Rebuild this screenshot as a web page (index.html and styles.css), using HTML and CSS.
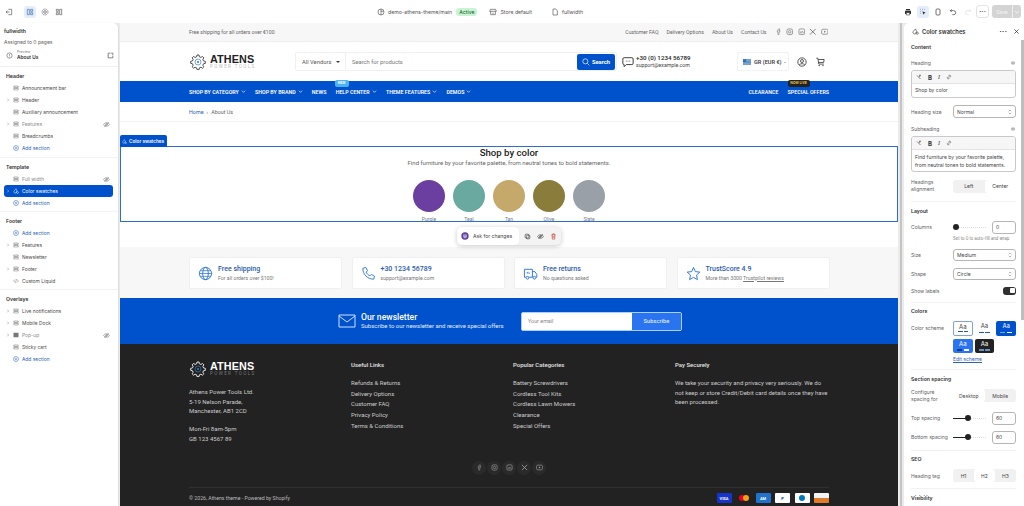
FILE: index.html
```html
<!DOCTYPE html>
<html lang="en">
<head>
    <meta charset="UTF-8">
    <title>Color swatches - fullwidth</title>
    <link rel="stylesheet" href="styles.css">
</head>
<body>

<svg class="sprite" width="0" height="0">
    <symbol id="i-sec" viewBox="0 0 12 12"><path d="M1.5 2h9v2.5h-9zM1.5 7h9v3h-9zM1.5 5.7h9" fill="none" stroke="currentColor"/></symbol>
    <symbol id="i-chev" viewBox="0 0 12 12"><path d="M4 2l4 4-4 4" fill="none" stroke="currentColor" stroke-width="1.4"/></symbol>
    <symbol id="i-down" viewBox="0 0 12 12"><path d="M2 4l4 4 4-4" fill="none" stroke="currentColor" stroke-width="1.6"/></symbol>
    <symbol id="i-updown" viewBox="0 0 12 12"><path d="M3.500 4.500L6 2l2.500 2.500M3.500 7.500L6 10l2.500-2.500" fill="none" stroke="currentColor" stroke-width="1.100"/></symbol>
    <symbol id="i-eye" viewBox="0 0 12 12"><path d="M1 6c2-4 8-4 10 0-2 4-8 4-10 0zM2.500 10L10 2" fill="none" stroke="currentColor"/><circle cx="6" cy="6" r="1.500" fill="none" stroke="currentColor"/></symbol>
    <symbol id="i-add" viewBox="0 0 12 12"><circle cx="6" cy="6" r="5" fill="none" stroke="currentColor"/><path d="M3.500 6h5M6 3.500v5" stroke="currentColor"/></symbol>
    <symbol id="i-swatch" viewBox="0 0 12 12"><path d="M6 1.500L2 6a3 3 0 0 0 4 4l2-4z" fill="none" stroke="currentColor"/><circle cx="9" cy="9" r="1.800" fill="none" stroke="currentColor"/></symbol>
    <symbol id="i-gear" viewBox="0 0 24 24"><g fill="none" stroke="currentColor" stroke-width="1.300"><path d="M10.500 1.500h3l.6 2.700 2.300 1 2.300-1.500 2.100 2.100-1.500 2.300 1 2.300 2.700.6v3l-2.700.6-1 2.300 1.500 2.300-2.100 2.100-2.300-1.500-2.300 1-.6 2.700h-3l-.6-2.700-2.300-1-2.300 1.500-2.100-2.100 1.500-2.300-1-2.300-2.700-.6v-3l2.700-.6 1-2.300-1.500-2.300 2.100-2.100 2.300 1.500 2.300-1z"/></g><circle cx="12" cy="12" r="4.500" fill="none" stroke="#2f7fc1" stroke-width="1"/><circle cx="12" cy="12" r="1.500" fill="#2f7fc1"/></symbol>
    <symbol id="i-fb" viewBox="0 0 12 12"><path d="M7.500 1.500H6.300C5.200 1.500 4.700 2.200 4.700 3.200v1.300H3.500v1.700h1.200v4.300h1.700V6.200h1.300l.3-1.700H6.400V3.500c0-.3.200-.4.500-.4h.6z" fill="none" stroke="currentColor" stroke-width=".8"/></symbol>
    <symbol id="i-ig" viewBox="0 0 12 12"><rect x="1.500" y="1.500" width="9" height="9" rx="2.500" fill="none" stroke="currentColor"/><circle cx="6" cy="6" r="2" fill="none" stroke="currentColor"/></symbol>
    <symbol id="i-in" viewBox="0 0 12 12"><rect x="1.500" y="1.500" width="9" height="9" rx="2" fill="none" stroke="currentColor"/><path d="M4 5.500V8.500M6 8.500V5.500M6 6.800c0-1.500 2.300-1.500 2.300 0v1.700" fill="none" stroke="currentColor" stroke-width=".8"/></symbol>
    <symbol id="i-x" viewBox="0 0 12 12"><path d="M1.500 1.500l9 9M10.500 1.500l-9 9" stroke="currentColor" stroke-width="1.300"/></symbol>
    <symbol id="i-yt" viewBox="0 0 12 12"><rect x="1" y="2" width="10" height="8" rx="2" fill="none" stroke="currentColor"/><path d="M5 4.300L7.800 6 5 7.700z" fill="currentColor"/></symbol>
    <symbol id="i-clear" viewBox="0 0 12 12"><path d="M2 3l3 3M5 6l4 4M6 2.500h4M8 2.500L7 6" fill="none" stroke="currentColor" stroke-width="1.200"/></symbol>
    <symbol id="i-link" viewBox="0 0 12 12"><path d="M5 7l2-2M4.500 5L3 6.500a2 2 0 0 0 2.800 2.800L7 8M5 4l1.200-1.300A2 2 0 0 1 9 5.500L7.500 7" fill="none" stroke="currentColor"/></symbol>
</svg>

<div class="topbar">
    <div class="top-left">
        <svg class="ti" viewBox="0 0 12 12"><path d="M5 2h5v8H5M7 6H1.500M3.500 4L1.500 6l2 2" fill="none" stroke="currentColor"/></svg>
        <span class="top-sep"></span>
        <span class="ti-box on"><svg class="ti" viewBox="0 0 12 12"><path d="M2 2h3v8H2zM7 2h3v3H7zM7 7h3v3H7z" fill="none" stroke="currentColor"/></svg></span>
        <span class="ti-box"><svg class="ti" viewBox="0 0 12 12"><circle cx="6" cy="6" r="2" fill="none" stroke="currentColor"/><circle cx="6" cy="6" r="4.500" fill="none" stroke="currentColor" stroke-dasharray="2 .8"/></svg></span>
        <span class="ti-box"><svg class="ti" viewBox="0 0 12 12"><path d="M2 2h3v3H2zM2 7h3v3H2zM7 2h3v8H7z" fill="none" stroke="currentColor"/></svg></span>
    </div>
    <div class="top-center">
        <span class="crumb"><svg class="ti" viewBox="0 0 12 12"><circle cx="6" cy="6" r="4.500" fill="none" stroke="currentColor"/><path d="M6 1.500v9M6 5h4" stroke="currentColor"/></svg>demo-athens-theme/main</span>
        <span class="badge-active">Active</span>
        <span class="crumb store"><svg class="ti" viewBox="0 0 12 12"><path d="M2 2h8l1 3H1zM2.500 5v5h7V5M5 8h2" fill="none" stroke="currentColor"/></svg>Store default</span>
        <span class="crumb page"><svg class="ti" viewBox="0 0 12 12"><path d="M3 1.500h4l2.500 2.500v6.500H3z" fill="none" stroke="currentColor"/></svg>fullwidth</span>
    </div>
    <div class="top-right">
        <svg class="ti dark" viewBox="0 0 12 12"><path d="M3 1.500h6v2H3zM1.500 4h9v5h-9z" fill="currentColor"/><path d="M3.500 7h5v3.500h-5z" fill="#fff" stroke="currentColor" stroke-width=".8"/></svg>
        <span class="ti-box on"><svg class="ti" viewBox="0 0 12 12"><path d="M2 2h1M5 2h1M8 2h1M2 5h1M2 8h1" stroke="currentColor"/><path d="M5 5l5 2-2 1-1 2z" fill="#222"/></svg></span>
        <svg class="ti dark" viewBox="0 0 12 12"><rect x="3" y="1.500" width="6" height="9" rx="1.500" fill="none" stroke="currentColor"/></svg>
        <svg class="ti dark" viewBox="0 0 12 12"><path d="M4 2L2 4l2 2M2 4h5a2.500 2.500 0 0 1 0 6H5" fill="none" stroke="currentColor"/></svg>
        <svg class="ti faint" viewBox="0 0 12 12"><path d="M8 2l2 2-2 2M10 4H5a2.500 2.500 0 0 0 0 6h2" fill="none" stroke="currentColor"/></svg>
        <span class="more-btn">&middot;&middot;&middot;</span>
        <span class="save-btn"><span>Save</span><i></i><svg viewBox="0 0 12 12"><use href="#i-down"/></svg></span>
    </div>
</div>

<div class="app">
    <aside class="sidebar">
        <div class="side-head">
            <div class="tpl-name">fullwidth</div>
            <div class="tpl-sub">Assigned to 0 pages</div>
            <div class="preview-row">
                <svg viewBox="0 0 12 12"><circle cx="6" cy="6" r="4.500" fill="none" stroke="currentColor"/><path d="M6 3.500V6.500M6 8v1" stroke="currentColor"/></svg>
                <div class="preview-text"><small>Preview</small><b>About Us</b></div>
                <svg class="ext" viewBox="0 0 12 12"><path d="M6 2H2v8h8V6M7 2h3v3" fill="none" stroke="currentColor" stroke-width="1.200"/></svg>
            </div>
        </div>

        <div class="group">
            <h4>Header</h4>
            <div class="row"><span class="arrow"></span><svg class="ic"><use href="#i-sec"/></svg>Announcement bar</div>
            <div class="row"><svg class="arrow"><use href="#i-chev"/></svg><svg class="ic"><use href="#i-sec"/></svg>Header</div>
            <div class="row"><span class="arrow"></span><svg class="ic"><use href="#i-sec"/></svg>Auxiliary announcement</div>
            <div class="row muted"><svg class="arrow"><use href="#i-chev"/></svg><svg class="ic"><use href="#i-sec"/></svg>Features<svg class="eye"><use href="#i-eye"/></svg></div>
            <div class="row"><span class="arrow"></span><svg class="ic"><use href="#i-sec"/></svg>Breadcrumbs</div>
            <div class="row add"><span class="arrow"></span><svg class="ic"><use href="#i-add"/></svg>Add section</div>
        </div>
        <div class="group">
            <h4>Template</h4>
            <div class="row muted"><span class="arrow"></span><svg class="ic"><use href="#i-sec"/></svg>Full width<svg class="eye"><use href="#i-eye"/></svg></div>
            <div class="row active"><svg class="arrow"><use href="#i-chev"/></svg><svg class="ic"><use href="#i-swatch"/></svg>Color swatches</div>
            <div class="row add"><span class="arrow"></span><svg class="ic"><use href="#i-add"/></svg>Add section</div>
        </div>
        <div class="group">
            <h4>Footer</h4>
            <div class="row add"><span class="arrow"></span><svg class="ic"><use href="#i-add"/></svg>Add section</div>
            <div class="row"><svg class="arrow"><use href="#i-chev"/></svg><svg class="ic"><use href="#i-sec"/></svg>Features</div>
            <div class="row"><span class="arrow"></span><svg class="ic"><use href="#i-sec"/></svg>Newsletter</div>
            <div class="row"><svg class="arrow"><use href="#i-chev"/></svg><svg class="ic"><use href="#i-sec"/></svg>Footer</div>
            <div class="row"><span class="arrow"></span><svg class="ic" viewBox="0 0 12 12"><path d="M4 3L1 6l3 3M8 3l3 3-3 3M7 2L5 10" fill="none" stroke="currentColor"/></svg>Custom Liquid</div>
        </div>
        <div class="group last">
            <h4>Overlays</h4>
            <div class="row"><svg class="arrow"><use href="#i-chev"/></svg><svg class="ic"><use href="#i-sec"/></svg>Live notifications</div>
            <div class="row"><svg class="arrow"><use href="#i-chev"/></svg><svg class="ic"><use href="#i-sec"/></svg>Mobile Dock</div>
            <div class="row muted"><svg class="arrow"><use href="#i-chev"/></svg><svg class="ic" viewBox="0 0 12 12"><rect x="1" y="1.500" width="10" height="9" fill="currentColor"/></svg>Pop-up<svg class="eye"><use href="#i-eye"/></svg></div>
            <div class="row"><span class="arrow"></span><svg class="ic"><use href="#i-sec"/></svg>Sticky cart</div>
            <div class="row add"><span class="arrow"></span><svg class="ic"><use href="#i-add"/></svg>Add section</div>
        </div>
    </aside>

    <main class="preview">
        <div class="announce">
            <div class="wrap announce-in">
                <span>Free shipping for all orders over €100</span>
                <nav class="announce-links">
                    <a>Customer FAQ</a><a>Delivery Options</a><a>About Us</a><a>Contact Us</a>
                    <span class="socials">
                        <svg><use href="#i-fb"/></svg><svg><use href="#i-ig"/></svg><svg><use href="#i-in"/></svg><svg><use href="#i-x"/></svg><svg><use href="#i-yt"/></svg>
                    </span>
                </nav>
            </div>
        </div>

        <header class="shop-header">
            <div class="wrap shop-header-in">
                <div class="logo">
                    <svg class="logo-gear"><use href="#i-gear"/></svg>
                    <div class="logo-text"><b>ATHENS</b><span>POWER TOOLS</span></div>
                </div>
                <div class="search">
                    <span class="vendors">All Vendors<i></i></span>
                    <span class="search-input">Search for products</span>
                    <span class="search-btn"><svg viewBox="0 0 12 12"><circle cx="5" cy="5" r="3.800" fill="none" stroke="#fff"/><path d="M8 8l3 3" stroke="#fff"/></svg>Search</span>
                </div>
                <div class="contact">
                    <svg viewBox="0 0 14 14"><path d="M2.500 2h9A1.500 1.500 0 0 1 13 3.500v5A1.500 1.500 0 0 1 11.500 10H5l-2.500 2.500V10A1.500 1.500 0 0 1 1 8.500v-5A1.500 1.500 0 0 1 2.500 2z" fill="none" stroke="#222"/><path d="M4.500 6h.8M6.600 6h.8M8.700 6h.8" stroke="#222"/></svg>
                    <div><b>+30 (0) 1234 56789</b><span>support@example.com</span></div>
                </div>
                <div class="currency">
                    <svg viewBox="0 0 9 6"><rect width="9" height="6" fill="#2f6fb5"/><path d="M0 1.500h9M0 3h9M0 4.500h9" stroke="#fff" stroke-width=".5"/><rect width="3.500" height="3" fill="#2f6fb5"/></svg>
                    <span>GR (EUR €)</span><i></i>
                </div>
                <svg class="head-ic" viewBox="0 0 12 12"><circle cx="6" cy="6" r="5" fill="none" stroke="#222" stroke-width=".9"/><circle cx="6" cy="4.800" r="1.800" fill="none" stroke="#222" stroke-width=".9"/><path d="M2.800 9.500c1.500-2 5-2 6.400 0" fill="none" stroke="#222" stroke-width=".9"/></svg>
                <svg class="head-ic" viewBox="0 0 12 12"><path d="M1.500 1.500h2l1 7h6M4 3h7l-.6 3.500H4.500" fill="none" stroke="#222" stroke-width=".9"/><circle cx="5" cy="10.300" r=".8" fill="#222"/><circle cx="9.500" cy="10.300" r=".8" fill="#222"/></svg>
            </div>
        </header>

        <div class="main-nav">
            <div class="wrap main-nav-in">
                <a>SHOP BY CATEGORY<svg><use href="#i-down"/></svg></a>
                <a>SHOP BY BRAND<svg><use href="#i-down"/></svg></a>
                <a>NEWS</a>
                <a class="has-badge"><em class="badge-new">NEW</em>HELP CENTER<svg><use href="#i-down"/></svg></a>
                <a>THEME FEATURES<svg><use href="#i-down"/></svg></a>
                <a>DEMOS<svg><use href="#i-down"/></svg></a>
                <a class="push">CLEARANCE</a>
                <a class="has-badge"><em class="badge-live">NOW LIVE</em>SPECIAL OFFERS</a>
            </div>
        </div>

        <div class="breadcrumbs">
            <div class="wrap"><a>Home</a><i>&rsaquo;</i>About Us</div>
        </div>

        <div class="spacer-top"></div>

        <section class="swatches">
            <span class="section-tab"><svg><use href="#i-swatch"/></svg>Color swatches</span>
            <h2>Shop by color</h2>
            <p>Find furniture by your favorite palette, from neutral tones to bold statements.</p>
            <div class="swatch-list">
                <div class="swatch"><span class="dot purple"></span>Purple</div>
                <div class="swatch"><span class="dot teal"></span>Teal</div>
                <div class="swatch"><span class="dot tan"></span>Tan</div>
                <div class="swatch"><span class="dot olive"></span>Olive</div>
                <div class="swatch"><span class="dot slate"></span>Slate</div>
            </div>
        </section>

        <div class="spacer-mid">
            <div class="float-bar">
                <span class="ask">
                    <svg viewBox="0 0 12 12"><circle cx="6" cy="6" r="5.500" fill="#5b3fa0"/><path d="M3 4.500h6M3 6.500h6M4 8.500h4" stroke="#fff"/></svg>
                    Ask for changes
                </span>
                <span class="float-ics">
                    <svg viewBox="0 0 12 12"><rect x="2" y="2" width="6.500" height="6.500" rx="1.500" fill="none" stroke="#333"/><rect x="4" y="4" width="6" height="6" rx="1.500" fill="none" stroke="#333"/></svg>
                    <svg viewBox="0 0 12 12"><use href="#i-eye"/></svg>
                    <svg class="red" viewBox="0 0 12 12"><path d="M2.500 3h7M4.500 3V1.500h3V3M3.500 3l.5 7.500h4L8.500 3M5 5v3.500M7 5v3.500" fill="none" stroke="#c0392b"/></svg>
                </span>
            </div>
        </div>

        <section class="features">
            <div class="wrap feature-grid">
                <div class="feature">
                    <svg viewBox="0 0 16 16"><circle cx="8" cy="8" r="6.500" fill="none" stroke="#2b74d8"/><ellipse cx="8" cy="8" rx="3" ry="6.500" fill="none" stroke="#2b74d8"/><path d="M1.500 8h13M2.500 5h11M2.500 11h11" stroke="#2b74d8" stroke-width=".8"/></svg>
                    <div><b>Free shipping</b><span>For all orders over $100!</span></div>
                </div>
                <div class="feature">
                    <svg viewBox="0 0 16 16"><path d="M2 2.500L5 1.500l2 3.500-1.500 1.500c.8 1.800 2.200 3.200 4 4L11 9l3.500 2-1 3c-6 .5-12-5.500-11.500-11.500z" fill="none" stroke="#2b74d8" stroke-linejoin="round"/></svg>
                    <div><b>+30 1234 56789</b><span>support@example.com</span></div>
                </div>
                <div class="feature">
                    <svg viewBox="0 0 16 16"><path d="M3 12H1.500V3.500h8.500V12H6.500M10 6h2.700l2 3v3H14M10 12h.5" fill="none" stroke="#2b74d8"/><circle cx="4.800" cy="12.500" r="1.500" fill="none" stroke="#2b74d8"/><circle cx="12.200" cy="12.500" r="1.500" fill="none" stroke="#2b74d8"/><path d="M4 7.500h3.500M4 7.500l1.300-1.300" fill="none" stroke="#2b74d8" stroke-width=".8"/></svg>
                    <div><b>Free returns</b><span>No questions asked</span></div>
                </div>
                <div class="feature">
                    <svg viewBox="0 0 16 16"><path d="M8 1.500l2 4.500 4.800.5-3.600 3.200 1 4.800L8 12.100l-4.200 2.400 1-4.800L1.200 6.500 6 6z" fill="none" stroke="#2b74d8" stroke-linejoin="round"/></svg>
                    <div><b>TrustScore 4.9</b><span>More than 3000 <u>Trustpilot reviews</u></span></div>
                </div>
            </div>
        </section>

        <section class="newsletter">
            <svg viewBox="0 0 18 14"><path d="M1 1h16v12H1zM1 2l8 6 8-6" fill="none" stroke="#cfe0fb"/></svg>
            <div class="news-text"><h3>Our newsletter</h3><p>Subscribe to our newsletter and receive special offers</p></div>
            <div class="news-form"><span>Your email</span><b>Subscribe</b></div>
        </section>

        <footer class="site-footer">
            <div class="wrap">
                <div class="foot-grid">
                    <div>
                        <div class="logo light">
                            <svg class="logo-gear"><use href="#i-gear"/></svg>
                            <div class="logo-text"><b>ATHENS</b><span>POWER TOOLS</span></div>
                        </div>
                        <p class="addr">Athens Power Tools Ltd.<br>5-19 Nelson Parade,<br>Manchester, AB1 2CD</p>
                        <p class="addr">Mon-Fri 8am-5pm<br>GB 123 4567 89</p>
                    </div>
                    <div>
                        <h5>Useful Links</h5>
                        <a>Refunds &amp; Returns</a><a>Delivery Options</a><a>Customer FAQ</a><a>Privacy Policy</a><a>Terms &amp; Conditions</a>
                    </div>
                    <div>
                        <h5>Popular Categories</h5>
                        <a>Battery Screwdrivers</a><a>Cordless Tool Kits</a><a>Cordless Lawn Mowers</a><a>Clearance</a><a>Special Offers</a>
                    </div>
                    <div>
                        <h5>Pay Securely</h5>
                        <p class="pay-note">We take your security and privacy very seriously. We do not keep or store Credit/Debit card details once they have been processed.</p>
                    </div>
                </div>
                <div class="foot-social">
                    <span><svg><use href="#i-fb"/></svg></span><span><svg><use href="#i-ig"/></svg></span><span><svg><use href="#i-in"/></svg></span><span><svg><use href="#i-x"/></svg></span><span><svg><use href="#i-yt"/></svg></span>
                </div>
                <div class="foot-bottom">
                    <span>© 2026, Athens theme - Powered by Shopify</span>
                    <div class="pay-cards">
                        <span class="card visa">VISA</span>
                        <span class="card mc"><i></i><i></i></span>
                        <span class="card amex">AM</span>
                        <span class="card paypal">P</span>
                        <span class="card diners"><i></i></span>
                        <span class="card disc"></span>
                    </div>
                </div>
            </div>
        </footer>
    </main>

    <div class="gutter"></div>

    <aside class="panel">
        <div class="panel-head">
            <svg><use href="#i-swatch"/></svg><b>Color swatches</b>
            <span class="dots">&middot;&middot;&middot;</span>
            <svg class="close" viewBox="0 0 12 12"><path d="M2.500 2.500l7 7M9.500 2.500l-7 7" stroke="currentColor" stroke-width="1.300"/></svg>
        </div>
        <div class="panel-body">
            <h4>Content</h4>
            <div class="label-row"><label>Heading</label><svg viewBox="0 0 12 12"><ellipse cx="6" cy="6" rx="4.500" ry="3.500" fill="#bbb"/></svg></div>
            <div class="editor">
                <div class="ed-tools"><svg><use href="#i-clear"/></svg><b>B</b><em>I</em><svg><use href="#i-link"/></svg></div>
                <div class="ed-text">Shop by color</div>
            </div>
            <div class="field"><label>Heading size</label><span class="select">Normal<svg><use href="#i-updown"/></svg></span></div>
            <div class="label-row"><label>Subheading</label><svg viewBox="0 0 12 12"><ellipse cx="6" cy="6" rx="4.500" ry="3.500" fill="#bbb"/></svg></div>
            <div class="editor">
                <div class="ed-tools"><svg><use href="#i-clear"/></svg><b>B</b><em>I</em><svg><use href="#i-link"/></svg></div>
                <div class="ed-text tall">Find furniture by your favorite palette, from neutral tones to bold statements.</div>
            </div>
            <div class="field"><label class="two">Headings alignment</label><span class="seg"><a>Left</a><a class="sel">Center</a></span></div>
            <hr class="wide">
            <h4>Layout</h4>
            <div class="field"><label>Columns</label><span class="slider"><i class="knob zero"></i></span><span class="num">0</span></div>
            <div class="hint">Set to 0 to auto-fill and wrap</div>
            <div class="field"><label>Size</label><span class="select">Medium<svg><use href="#i-updown"/></svg></span></div>
            <div class="field"><label>Shape</label><span class="select">Circle<svg><use href="#i-updown"/></svg></span></div>
            <div class="field toggle-row"><label>Show labels</label><span class="toggle"><i></i></span></div>
            <hr>
            <h4>Colors</h4>
            <div class="field schemes-row"><label>Color scheme</label>
                <div class="schemes">
                    <span class="sch sch-sel">Aa<i></i></span>
                    <span class="sch">Aa<i></i></span>
                    <span class="sch sch-blue">Aa<i></i></span>
                    <span class="sch sch-light">Aa<i></i></span>
                    <span class="sch sch-dark">Aa<i></i></span>
                </div>
            </div>
            <a class="edit-scheme">Edit scheme</a>
            <hr class="tight">
            <h4>Section spacing</h4>
            <div class="field"><label class="two">Configure spacing for</label><span class="seg"><a class="sel">Desktop</a><a>Mobile</a></span></div>
            <div class="field gap"><label>Top spacing</label><span class="slider"><b></b><i class="knob"></i></span><span class="num">60</span></div>
            <div class="field gap"><label>Bottom spacing</label><span class="slider"><b></b><i class="knob"></i></span><span class="num">60</span></div>
            <hr class="tight">
            <h4>SEO</h4>
            <div class="field seo"><label>Heading tag</label><span class="seg"><a>H1</a><a class="sel">H2</a><a>H3</a></span></div>
            <hr class="tight">
            <h4>Visibility</h4>
        </div>
        <span class="panel-scroll"></span>
    </aside>
</div>

</body>
</html>
```

FILE: styles.css
```css
* {
    box-sizing: border-box;
}

html, body {
    margin: 0;
    height: 100%;
    overflow: hidden;
}

body {
    font-family: "Inter", sans-serif;
    font-size: 5px;
    color: #303030;
    background: #ebebeb;
}

.sprite {
    position: absolute;
}

h2, h3, h4, h5, p {
    margin: 0;
}

/* top bar */
.topbar {
    height: 23px;
    background: #fff;
    display: flex;
    align-items: center;
    padding-left: 5px;
    padding-right: 3px;
}

.ti {
    width: 8px;
    height: 8px;
    color: #555;
    flex: none;
}

.ti.dark {
    color: #303030;
}

.ti.faint {
    color: #ddd;
}

.top-left {
    display: flex;
    align-items: center;
    gap: 2.500px;
    width: 372px;
}

.top-sep {
    width: 6px;
}

.ti-box {
    width: 12px;
    height: 12px;
    border-radius: 3px;
    display: flex;
    align-items: center;
    justify-content: center;
}

.ti-box.on {
    background: #e4edf9;
}

.ti-box.on .ti {
    color: #3b6fb5;
}

.top-center {
    display: flex;
    align-items: center;
    color: #555;
    font-size: 5.2px;
}

.crumb {
    display: flex;
    align-items: center;
    gap: 3px;
}

.store {
    margin-left: 12px;
}

.page {
    margin-left: 19px;
}

.badge-active {
    background: #c9f3d3;
    color: #0c5a2a;
    padding: 1px 3px;
    border-radius: 3px;
    margin-left: 4px;
}

.top-right {
    display: flex;
    align-items: center;
    gap: 7px;
    margin-left: auto;
}

.top-right .ti-box {
    margin: 0 -2px;
}

.more-btn {
    width: 13px;
    height: 13px;
    border: 1px solid #e3e3e3;
    border-radius: 3px;
    font-size: 8px;
    line-height: 10px;
    text-align: center;
    margin-left: -3px;
}

.save-btn {
    width: 29px;
    height: 13px;
    background: #d4d4d4;
    border-radius: 3px;
    color: #f4f4f4;
    display: flex;
    align-items: center;
    margin-left: -4px;
}

.save-btn span {
    width: 20px;
    text-align: center;
}

.save-btn i {
    width: 1px;
    height: 100%;
    background: #eee;
}

.save-btn svg {
    width: 6px;
    height: 6px;
    margin-left: 1px;
    color: #f4f4f4;
}

.app {
    display: flex;
    height: 483px;
}

/* left sidebar */
.sidebar {
    width: 118px;
    flex: none;
    background: #fff;
    border-top-right-radius: 5px;
    margin-right: 2px;
    box-shadow: 1px 0 1px #ddd;
    overflow: hidden;
}

.side-head {
    padding: 4px 4px 0;
    height: 44px;
    border-bottom: 1px solid #f1f1f1;
}

.tpl-name {
    font-weight: 600;
    font-size: 5.2px;
    line-height: 8px;
}

.tpl-sub {
    color: #616161;
    font-size: 5px;
    line-height: 8px;
    margin-top: 3px;
}

.preview-row {
    display: flex;
    align-items: center;
    gap: 4px;
    margin-top: 4px;
    padding-left: 2px;
}

.preview-row svg {
    width: 7px;
    height: 7px;
    color: #555;
    flex: none;
}

.preview-text {
    display: flex;
    flex-direction: column;
    flex: 1;
    line-height: 6px;
}

.preview-text small {
    font-size: 3.6px;
    color: #777;
    line-height: 4px;
}

.preview-text b {
    font-weight: 600;
    font-size: 4.8px;
}

.group {
    padding: 5px 5px 0 4px;
    height: 91px;
    border-bottom: 1px solid #f3f3f3;
}

.group:nth-of-type(3) {
    height: 54px;
}

.group:nth-of-type(4) {
    height: 78px;
}

.group.last {
    border: 0;
}

.group h4 {
    font-size: 5.2px;
    font-weight: 600;
    line-height: 8px;
    padding-left: 2px;
    margin-bottom: 2px;
}

.row {
    height: 12px;
    display: flex;
    align-items: center;
    color: #4a4a4a;
    font-size: 4.9px;
    border-radius: 3px;
}

.row.muted {
    color: #8a8a8a;
}

.row .arrow {
    width: 4px;
    height: 4px;
    margin-left: 2px;
    margin-right: 3px;
    color: #777;
    flex: none;
}

.row .ic {
    width: 6px;
    height: 6px;
    margin-right: 3px;
    color: #777;
    flex: none;
}

.row .eye {
    width: 7px;
    height: 7px;
    margin-left: auto;
    margin-right: 3px;
    color: #777;
}

.row.add {
    color: #2a63b7;
}

.row.add .ic {
    color: #2a63b7;
}

.row.active {
    background: #0052cc;
    color: #fff;
}

.row.active .arrow,
.row.active .ic {
    color: #fff;
}

/* storefront preview */
.preview {
    width: 778px;
    flex: none;
    background: #fff;
    display: flex;
    flex-direction: column;
    font-family: "Roboto", sans-serif;
    height: 483px;
    overflow: hidden;
}

.preview > * {
    flex: none;
}

.wrap {
    width: 640px;
    margin: 0 auto;
}

.announce {
    height: 19px;
    background: #f7f7f7;
    border-bottom: 1px solid #eee;
    color: #666;
    font-size: 5.2px;
}

.announce-in {
    height: 100%;
    display: flex;
    align-items: center;
    justify-content: space-between;
}

.announce-links {
    display: flex;
    align-items: center;
    gap: 8px;
}

.socials {
    display: flex;
    gap: 4px;
    margin-right: 1px;
}

.socials svg {
    width: 7.500px;
    height: 7.500px;
    color: #666;
}

.shop-header {
    height: 39px;
}

.shop-header-in {
    height: 100%;
    display: flex;
    align-items: center;
}

.logo {
    display: flex;
    align-items: center;
    gap: 4px;
    width: 106px;
}

.logo-gear {
    width: 16px;
    height: 16px;
    color: #333;
    margin-left: 1px;
}

.logo-text {
    display: flex;
    flex-direction: column;
    line-height: 1;
}

.logo-text b {
    font-family: "Liberation Sans", sans-serif;
    font-size: 10.8px;
    letter-spacing: .1px;
    color: #222;
}

.logo-text span {
    font-size: 4.5px;
    letter-spacing: 1.400px;
    color: #bbb;
    white-space: nowrap;
}

.logo.light .logo-gear {
    color: #fff;
}

.logo.light b {
    color: #fff;
}

.logo.light span {
    color: #777;
}

.search {
    width: 322px;
    height: 19px;
    border: 1px solid #f0f0f0;
    border-radius: 2px;
    display: flex;
    align-items: center;
    color: #777;
    font-size: 5.8px;
}

.vendors {
    width: 50px;
    padding-left: 6px;
    border-right: 1px solid #f0f0f0;
    height: 100%;
    display: flex;
    align-items: center;
    color: #555;
}

.vendors i {
    margin-left: 5px;
    border: 2px solid transparent;
    border-top-color: #333;
    margin-top: 2px;
}

.search-input {
    flex: 1;
    padding-left: 6px;
}

.search-btn {
    width: 38px;
    height: 16px;
    background: #0052cc;
    color: #fff;
    font-weight: 700;
    border-radius: 2px;
    display: flex;
    align-items: center;
    justify-content: center;
    gap: 2px;
    margin-right: 1px;
}

.search-btn svg {
    width: 8px;
    height: 8px;
}

.contact {
    display: flex;
    align-items: center;
    gap: 2px;
    margin-left: 5px;
    width: 115px;
}

.contact svg {
    width: 12px;
    height: 12px;
}

.contact div {
    display: flex;
    flex-direction: column;
    line-height: 6.5px;
    font-size: 5.2px;
    color: #444;
}

.contact b {
    font-size: 6.2px;
    font-weight: 500;
    color: #222;
}

.currency {
    width: 52px;
    height: 19px;
    border: 1px solid #f2f2f2;
    border-radius: 2px;
    display: flex;
    align-items: center;
    padding-left: 5px;
    gap: 3px;
    font-size: 5.6px;
    font-weight: 500;
    color: #333;
}

.currency svg {
    width: 8px;
    height: 6px;
}

.currency i {
    border: 1.500px solid transparent;
    border-top-color: #777;
    margin-top: 2px;
    margin-left: -1px;
}

.head-ic {
    width: 10px;
    height: 10px;
    margin-left: 8px;
}

.main-nav {
    height: 21px;
    background: #0052cc;
    color: #fff;
    font-size: 5.3px;
    font-weight: 600;
}

.main-nav-in {
    height: 100%;
    display: flex;
    align-items: center;
    gap: 9.200px;
}

.main-nav a {
    display: flex;
    align-items: center;
    gap: 2px;
    position: relative;
    white-space: nowrap;
}

.main-nav svg {
    width: 5px;
    height: 5px;
}

.main-nav .push {
    margin-left: auto;
}

.main-nav em {
    position: absolute;
    font-style: normal;
    font-size: 3.6px;
    line-height: 7px;
    height: 7px;
    border-radius: 2px;
    top: -9px;
    text-align: center;
}

.badge-new {
    background: #4db2f0;
    left: -1px;
    width: 14px;
}

.badge-live {
    background: #222;
    color: #f2c94c;
    left: 0;
    width: 22px;
}

.breadcrumbs {
    height: 20px;
    border-bottom: 1px solid #f1f1f1;
    font-size: 5.4px;
    color: #666;
    display: flex;
    align-items: center;
}

.breadcrumbs a {
    color: #2a63b7;
}

.breadcrumbs i {
    font-style: normal;
    margin: 0 3px;
}

.spacer-top {
    height: 24px;
}

.swatches {
    height: 76px;
    border: 1px solid #2c6ecb;
    position: relative;
    text-align: center;
}

.section-tab {
    position: absolute;
    left: -1px;
    top: -12px;
    height: 12px;
    width: 47px;
    background: #0052cc;
    color: #fff;
    font-family: "Inter", sans-serif;
    font-size: 4.7px;
    font-weight: 600;
    border-radius: 2px 2px 0 0;
    display: flex;
    align-items: center;
    gap: 2px;
    padding-left: 2px;
}

.section-tab svg {
    width: 5px;
    height: 5px;
}

.swatches h2 {
    font-size: 9.6px;
    font-weight: 500;
    line-height: 11px;
    color: #222;
}

.swatches p {
    font-size: 6px;
    color: #666;
    line-height: 8px;
    margin-top: 1px;
}

.swatch-list {
    display: flex;
    justify-content: center;
    gap: 8px;
    margin-top: 13px;
}

.swatch {
    width: 32px;
    font-size: 5px;
    color: #777;
    line-height: 6px;
}

.dot {
    display: block;
    width: 32px;
    height: 32px;
    border-radius: 50%;
    margin-bottom: 4px;
}

.purple { background: #6b3fa0; }
.teal { background: #6aa9a0; }
.tan { background: #c4a96a; }
.olive { background: #8a7d3b; }
.slate { background: #9aa0a8; }

.spacer-mid {
    height: 25px;
    position: relative;
}

.float-bar {
    position: absolute;
    left: 337px;
    top: 5px;
    width: 104px;
    height: 18px;
    background: #f3f3f3;
    border-radius: 5px;
    box-shadow: 0 1px 5px rgba(0,0,0,.22);
    display: flex;
    align-items: center;
    z-index: 2;
    font-family: "Inter", sans-serif;
}

.ask {
    width: 62px;
    height: 100%;
    background: #fff;
    border-radius: 5px;
    display: flex;
    align-items: center;
    gap: 4px;
    padding-left: 4px;
    font-size: 5.1px;
    color: #444;
}

.ask svg {
    width: 8px;
    height: 8px;
}

.float-ics {
    display: flex;
    gap: 6px;
    padding-left: 5px;
}

.float-ics svg {
    width: 7px;
    height: 7px;
    color: #333;
}

.features {
    height: 51px;
    background: #f7f7f7;
    padding-top: 10px;
}

.feature-grid {
    display: grid;
    grid-template-columns: repeat(4, 153px);
    gap: 9.500px;
}

.feature {
    height: 32px;
    background: #fff;
    border: 1px solid #f0f0f0;
    border-radius: 2px;
    display: flex;
    align-items: center;
    gap: 5px;
    padding-left: 8px;
}

.feature svg {
    width: 15px;
    height: 15px;
    flex: none;
}

.feature div {
    display: flex;
    flex-direction: column;
    line-height: 8px;
    font-size: 5.2px;
    color: #777;
}

.feature b {
    font-size: 7px;
    font-weight: 500;
    color: #2a5cab;
    line-height: 9px;
}

.newsletter {
    height: 46px;
    background: #0052cc;
    color: #fff;
    display: flex;
    align-items: center;
    padding-left: 218px;
}

.newsletter > svg {
    width: 18px;
    height: 14px;
}

.news-text {
    margin-left: 5px;
    width: 160px;
    margin-top: -1px;
}

.news-text h3 {
    font-size: 8.6px;
    font-weight: 500;
    line-height: 10px;
}

.news-text p {
    font-size: 6px;
    line-height: 8px;
    color: #e5edfb;
}

.news-form {
    width: 161px;
    height: 19px;
    background: #fff;
    border: 1px solid #a9d0fa;
    border-radius: 2px;
    display: flex;
    align-items: center;
    justify-content: space-between;
    color: #888;
    font-size: 5.4px;
    padding-left: 6px;
}

.news-form b {
    width: 49px;
    height: 100%;
    background: #2b74f0;
    color: #dde9fd;
    font-size: 5.8px;
    font-weight: 500;
    display: flex;
    align-items: center;
    justify-content: center;
}

.site-footer {
    height: 163px;
    background: #222;
    color: #ccc;
    font-size: 6px;
    padding-top: 17px;
}

.foot-grid {
    display: grid;
    grid-template-columns: 162px 162px 162px 154px;
    height: 91px;
}

.foot-grid h5 {
    font-size: 6px;
    font-weight: 500;
    color: #e4e4e4;
    line-height: 8px;
    margin-bottom: 9px;
}

.foot-grid a {
    display: block;
    line-height: 10.7px;
}

.addr {
    line-height: 9.7px;
    margin-top: 8px;
}

.addr + .addr {
    margin-top: 8px;
}

.logo.light + .addr {
    margin-top: 10px;
}

.pay-note {
    line-height: 9.7px;
}

.foot-social {
    display: flex;
    justify-content: center;
    gap: 1.500px;
    height: 15px;
    margin-top: 9px;
}

.foot-social span {
    width: 13.500px;
    height: 13.500px;
    border-radius: 50%;
    background: #2a2a2a;
    display: flex;
    align-items: center;
    justify-content: center;
}

.foot-social svg {
    width: 7px;
    height: 7px;
    color: #aaa;
}

.foot-bottom {
    margin-top: 11px;
    border-top: 1px solid #303030;
    display: flex;
    align-items: center;
    justify-content: space-between;
    height: 21px;
    font-size: 5.2px;
    color: #bbb;
}

.pay-cards {
    display: flex;
    gap: 4.500px;
}

.card {
    width: 15px;
    height: 9.500px;
    border-radius: 1px;
    display: flex;
    align-items: center;
    justify-content: center;
    font-size: 4px;
    font-weight: 700;
    color: #fff;
}

.visa { background: #1434cb; }
.mc { background: #222; }
.mc i { width: 6px; height: 6px; border-radius: 50%; background: #eb001b; }
.mc i + i { background: #f79e1b; margin-left: -2px; }
.amex { background: #1f72cd; }
.paypal { background: #fff; color: #003087; }
.diners { background: #fff; }
.diners i { width: 6px; height: 6px; border-radius: 50%; background: #0079be; }
.disc { background: linear-gradient(#f4f4f4 55%, #e07b2a 55%); }

.gutter {
    width: 6px;
    flex: none;
    padding-left: 2px;
}

.gutter::before {
    content: "";
    display: block;
    width: 2px;
    height: 100%;
    background: #c4c4c4;
}

/* settings panel */
.panel {
    width: 120px;
    flex: none;
    background: #fff;
    border-top-left-radius: 5px;
    position: relative;
    overflow: hidden;
}

.panel-head {
    height: 17px;
    display: flex;
    align-items: center;
    padding: 0 4px 0 8px;
    font-size: 5.8px;
}

.panel-head > svg:first-child {
    width: 7px;
    height: 7px;
    margin-right: 3px;
}

.panel-head b {
    font-weight: 600;
    flex: 1;
}

.dots {
    font-size: 9px;
    margin-right: 6px;
}

.close {
    width: 7px;
    height: 7px;
}

.panel-body {
    padding: 3px 8px 0 7px;
    font-size: 5px;
    color: #616161;
}

.panel-body h4 {
    font-size: 5.2px;
    font-weight: 600;
    color: #303030;
    line-height: 8px;
}

.panel-body hr {
    border: 0;
    border-top: 1px solid #f1f1f1;
    margin: 7px 0 4.500px;
}

.panel-body hr.wide {
    margin-top: 8px;
}

.panel-body hr.tight {
    margin-top: 6px;
}

.panel-body h4 + .field {
    margin-top: 6px;
}

.label-row {
    display: flex;
    justify-content: space-between;
    align-items: center;
    height: 8px;
    margin-top: 7px;
    margin-bottom: 3px;
}

h4 + .label-row {
    margin-top: 8px;
}

.label-row svg {
    width: 6px;
    height: 6px;
}

.editor {
    border: 1px solid #c9c9c9;
    border-radius: 3px;
    overflow: hidden;
    margin-bottom: 7px;
}

.ed-tools {
    height: 13px;
    background: #f6f6f6;
    border-bottom: 1px solid #e3e3e3;
    display: flex;
    align-items: center;
    gap: 6px;
    padding-left: 4px;
    color: #333;
    font-size: 6px;
}

.ed-tools svg {
    width: 6px;
    height: 6px;
}

.ed-tools em {
    font-family: "Liberation Serif", serif;
}

.ed-text {
    height: 13px;
    padding-left: 3px;
    line-height: 13px;
    color: #444;
}

.ed-text.tall {
    height: 21px;
    line-height: 8px;
    padding: 3px;
}

.field {
    display: flex;
    align-items: center;
    min-height: 13px;
}

.field label {
    width: 42px;
    flex: none;
}

.field label.two {
    line-height: 7px;
}

.select {
    flex: 1;
    height: 12.500px;
    border: 1px solid #b5b5b5;
    border-radius: 3px;
    display: flex;
    align-items: center;
    justify-content: space-between;
    padding: 0 2px 0 3px;
    color: #444;
}

.select svg {
    width: 6px;
    height: 6px;
    color: #777;
}

.seg {
    flex: 1;
    height: 13px;
    background: #f1f1f1;
    border-radius: 3px;
    display: flex;
    color: #444;
}

.seg a {
    flex: 1;
    display: flex;
    align-items: center;
    justify-content: center;
    border-radius: 3px;
}

.seg a.sel {
    background: #fff;
}

.slider {
    width: 33px;
    height: 1px;
    border-top: 1px dotted #ddd;
    position: relative;
    margin-right: 6px;
    flex: none;
}

.slider b {
    position: absolute;
    left: 0;
    top: -1px;
    width: 15px;
    height: 1px;
    background: #222;
}

.knob {
    position: absolute;
    width: 6px;
    height: 6px;
    top: -3.500px;
    left: 12px;
    border-radius: 50%;
    background: #222;
}

.knob.zero {
    left: 0;
}

.num {
    flex: 1;
    height: 13px;
    border: 1px solid #b5b5b5;
    border-radius: 3px;
    padding-left: 3px;
    line-height: 11px;
    color: #444;
}

.hint {
    font-size: 4.2px;
    color: #777;
    padding-left: 42px;
    line-height: 6px;
    margin: 2px 0 7px;
    white-space: nowrap;
}

.field + .field {
    margin-top: 6px;
}

.field.gap {
    margin-top: 9px;
}

.field.gap + .field.gap {
    margin-top: 6px;
}

.panel-body .seo {
    margin-top: 7px;
}

.toggle-row {
    justify-content: space-between;
    min-height: 8px;
}

.toggle {
    width: 13px;
    height: 8px;
    background: #303030;
    border-radius: 3px;
    position: relative;
}

.toggle i {
    position: absolute;
    right: 1.500px;
    top: 1.500px;
    width: 5px;
    height: 5px;
    background: #fff;
    border-radius: 1px;
}

.schemes-row {
    align-items: flex-start;
}

.schemes-row label {
    margin-top: 4px;
}

.schemes {
    flex: 1;
    display: grid;
    grid-template-columns: repeat(3, 1fr);
    gap: 3px 2px;
}

.sch {
    height: 14.500px;
    border-radius: 2px;
    text-align: center;
    font-size: 6px;
    line-height: 9px;
    color: #444;
    position: relative;
    background: #fff;
}

.sch i {
    position: absolute;
    left: 4px;
    right: 4px;
    bottom: 2.500px;
    height: 1.500px;
    background: linear-gradient(90deg, #2356a8 45%, transparent 45% 55%, #2356a8 55%);
}

.sch-sel {
    border: 1px solid #7fa3d8;
}

.sch-blue {
    background: #0052cc;
    color: #fff;
}

.sch-blue i {
    background: linear-gradient(90deg, #7fa3e8 45%, transparent 45% 55%, #fff 55%);
}

.sch-light {
    background: #2b74f0;
    color: #fff;
}

.sch-light i {
    background: linear-gradient(90deg, #0a3a9a 45%, transparent 45% 55%, #fff 55%);
}

.sch-dark {
    background: #222;
    color: #fff;
}

.sch-dark i {
    background: linear-gradient(90deg, #6a90c8 45%, transparent 45% 55%, #6a90c8 55%);
}

.edit-scheme {
    display: block;
    padding-left: 42px;
    color: #2a63b7;
    text-decoration: underline;
    line-height: 8px;
    margin-top: 2px;
}

.panel-scroll {
    position: absolute;
    right: 0;
    top: 17px;
    width: 3px;
    height: 280px;
    background: #bdbdbd;
}
```
